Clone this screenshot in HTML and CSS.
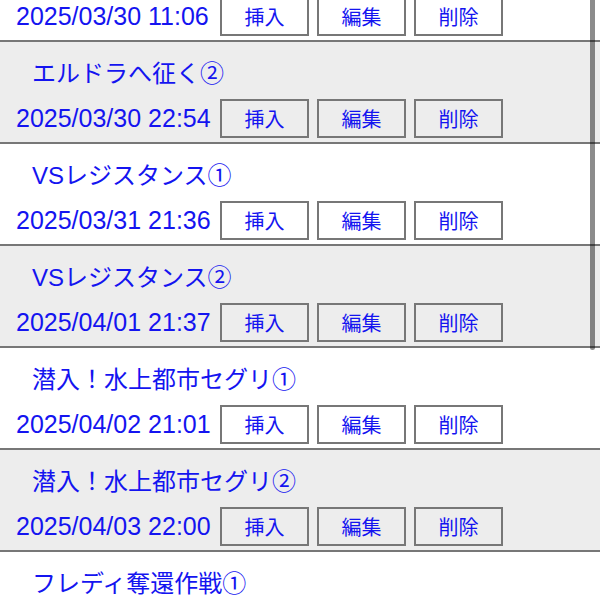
FILE: index.html
```html
<!DOCTYPE html>
<html lang="ja">
<head>
    <meta charset="UTF-8">
    <meta name="viewport" content="width=device-width, initial-scale=1.0">
    <title>話一覧</title>
    <link rel="stylesheet" href="styles.css">
</head>
<body>
    <div class="list">
        <div class="entry">
            <div class="entry-title">エルドラへ征く①</div>
            <div class="entry-row">
                <span class="entry-date">2025/03/30 11:06</span>
                <button class="button">挿入</button>
                <button class="button">編集</button>
                <button class="button">削除</button>
            </div>
        </div>

        <div class="entry alt">
            <div class="entry-title">エルドラへ征く②</div>
            <div class="entry-row">
                <span class="entry-date">2025/03/30 22:54</span>
                <button class="button">挿入</button>
                <button class="button">編集</button>
                <button class="button">削除</button>
            </div>
        </div>

        <div class="entry">
            <div class="entry-title">VSレジスタンス①</div>
            <div class="entry-row">
                <span class="entry-date">2025/03/31 21:36</span>
                <button class="button">挿入</button>
                <button class="button">編集</button>
                <button class="button">削除</button>
            </div>
        </div>

        <div class="entry alt">
            <div class="entry-title">VSレジスタンス②</div>
            <div class="entry-row">
                <span class="entry-date">2025/04/01 21:37</span>
                <button class="button">挿入</button>
                <button class="button">編集</button>
                <button class="button">削除</button>
            </div>
        </div>

        <div class="entry">
            <div class="entry-title">潜入！水上都市セグリ①</div>
            <div class="entry-row">
                <span class="entry-date">2025/04/02 21:01</span>
                <button class="button">挿入</button>
                <button class="button">編集</button>
                <button class="button">削除</button>
            </div>
        </div>

        <div class="entry alt">
            <div class="entry-title">潜入！水上都市セグリ②</div>
            <div class="entry-row">
                <span class="entry-date">2025/04/03 22:00</span>
                <button class="button">挿入</button>
                <button class="button">編集</button>
                <button class="button">削除</button>
            </div>
        </div>

        <div class="entry">
            <div class="entry-title">フレディ奪還作戦①</div>
            <div class="entry-row">
                <span class="entry-date">2025/04/04 21:15</span>
                <button class="button">挿入</button>
                <button class="button">編集</button>
                <button class="button">削除</button>
            </div>
        </div>
    </div>

    <div class="scroll-thumb"></div>
</body>
</html>
```

FILE: styles.css
```css
* {
    box-sizing: border-box;
    margin: 0;
    padding: 0;
}

body {
    background-color: #fff;
    font-family: 'Liberation Sans', 'Noto Sans CJK JP', sans-serif;
    color: #1414f0;
    overflow: hidden;
}

/* page is shown scrolled down a little */
.list {
    margin-top: -62px;
}

.entry {
    border-top: 2px solid #777;
    padding: 17px 0 4px 16px;
    background-color: #fff;
}

.entry.alt {
    background-color: #ededed;
}

.entry-title {
    font-size: 24px;
    line-height: 30px;
    padding-left: 16px;
    margin-bottom: 10px;
}

.entry-row {
    display: flex;
    align-items: center;
    gap: 8px;
}

.entry-date {
    width: 196px;
    font-size: 25px;
    white-space: nowrap;
}

.button {
    width: 89px;
    height: 39px;
    border: 2px solid #777;
    background: transparent;
    color: #1414f0;
    font-family: 'Liberation Sans', 'Noto Sans CJK JP', sans-serif;
    font-size: 20px;
}

.scroll-thumb {
    position: fixed;
    top: -20px;
    right: 5px;
    width: 5px;
    height: 370px;
    border-radius: 3px;
    background-color: rgba(0, 0, 0, 0.45);
}
```
